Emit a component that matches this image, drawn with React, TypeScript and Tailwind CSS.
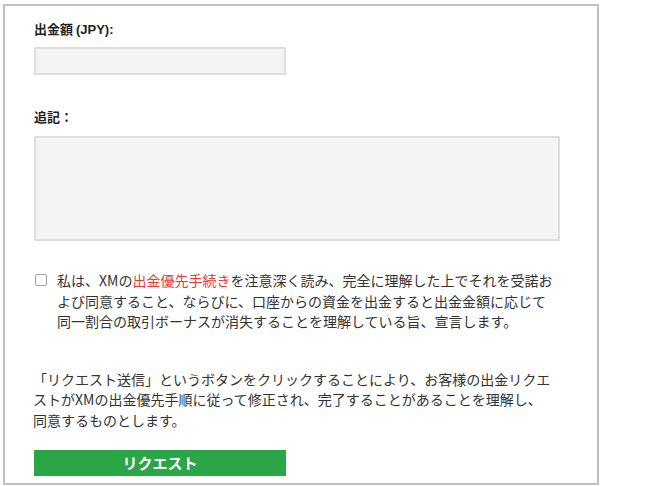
export default function App() {
  const font = { fontFamily: '"Noto Sans CJK JP", "Liberation Sans", sans-serif' };

  return (
    <div className="w-[660px] h-[486px] bg-white" style={font}>
      <div className="ml-[3px] mt-[4px] w-[596px] h-[481px] border-2 border-[#c0c0c0] pl-[29px] pt-[13px] text-[#333]">
        <label className="block text-[13px] leading-5 font-bold text-[#222]">
          出金額 <span style={{ fontFamily: '"Liberation Sans", sans-serif' }}>(JPY):</span>
        </label>
        <input
          type="text"
          className="mt-[7px] block w-[252px] h-[28px] border-2 border-[#dedede] bg-[#f4f4f4] outline-none"
        />

        <label className="mt-[32px] block text-[13px] leading-5 font-bold text-[#222]">
          追記：
        </label>
        <textarea className="mt-[9px] block w-[526px] h-[105px] border-2 border-[#dedede] bg-[#f4f4f4] resize-none outline-none" />

        <div className="mt-[29px] flex items-start text-[14px] leading-[20.5px]">
          <span className="mt-[4px] ml-[1px] w-[12px] h-[12px] shrink-0 border border-[#a0a0a0] rounded-[2px] bg-white" />
          <p className="ml-[10px]">
            私は、XMの<span className="text-[#e23b3b]">出金優先手続き</span>を注意深く読み、完全に理解した上でそれを受諾お
            <br />
            よび同意すること、ならびに、口座からの資金を出金すると出金金額に応じて
            <br />
            同一割合の取引ボーナスが消失することを理解している旨、宣言します。
          </p>
        </div>

        <p className="mt-[37px] text-[14px] leading-[20.5px] -ml-[1px]">
          「リクエスト送信」というボタンをクリックすることにより、お客様の出金リクエ
          <br />
          ストがXMの出金優先手順に従って修正され、完了することがあることを理解し、
          <br />
          同意するものとします。
        </p>

        <button className="mt-[20px] block w-[252px] h-[26px] bg-[#2ba646] text-white text-[15px] font-bold leading-[26px] text-center">
          リクエスト
        </button>
      </div>
    </div>
  );
}
